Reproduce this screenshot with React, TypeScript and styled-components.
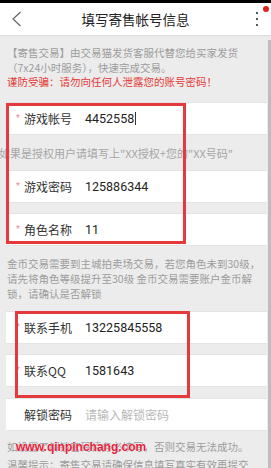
import React from "react";
import styled, { createGlobalStyle } from "styled-components";

const GlobalStyle = createGlobalStyle`
  html, body { margin: 0; padding: 0; background: #ececec; }
  body { font-family: Roboto, "Noto Sans CJK SC", sans-serif; }
  * { box-sizing: border-box; }
`;

const Page = styled.div`
  position: relative;
  width: 271px;
  height: 468px;
  overflow: hidden;
  background: #ececec;
`;

const Header = styled.header`
  height: 36px;
  border-top: 3px solid #000;
  border-bottom: 1px solid #dcdcdc;
  background: #fff;
  display: grid;
  grid-template-columns: 40px 1fr 40px;
  align-items: center;
`;

const BackBtn = styled.div`
  display: flex;
  align-items: center;
  padding-left: 11px;
`;

const Title = styled.h1`
  margin: 0;
  text-align: center;
  font-size: 13.5px;
  font-weight: 400;
  color: #222;
  font-family: "Noto Sans CJK SC", sans-serif;
`;

const MenuBtn = styled.div`
  position: relative;
  height: 100%;
`;

const Dots = styled.div`
  position: absolute;
  left: 25px;
  top: 9px;
  display: flex;
  flex-direction: column;
  gap: 4px;
  span {
    width: 2px;
    height: 2px;
    background: #555;
  }
`;

const Badge = styled.div`
  position: absolute;
  right: 2px;
  top: 3px;
  width: 6px;
  height: 6px;
  border-radius: 50%;
  background: #e0201e;
`;

const Note = styled.div<{ $pt?: number; $pb?: number; $lh?: number }>`
  padding: ${(p) => p.$pt ?? 10}px 6px ${(p) => p.$pb ?? 10}px 7px;
  font-size: 10.5px;
  line-height: ${(p) => p.$lh ?? 15}px;
  color: #9c9c9c;
  font-family: "Noto Sans CJK SC", sans-serif;
  white-space: nowrap;
`;

const Warn = styled.div`
  color: #e53935;
  line-height: 14px;
`;

const Row = styled.div<{ $mt?: number }>`
  margin: ${(p) => p.$mt ?? 0}px 4px 0 6px;
  height: 33px;
  background: #fff;
  border-top: 1px solid #e4e4e4;
  border-bottom: 1px solid #e4e4e4;
  display: flex;
  align-items: center;
  padding-left: 10px;
`;

const Star = styled.span`
  width: 8px;
  color: #e58a9e;
  font-size: 9px;
  line-height: 1;
`;

const Label = styled.span`
  width: 61px;
  font-size: 12px;
  color: #333;
  font-family: "Noto Sans CJK SC", sans-serif;
`;

const Value = styled.span<{ $placeholder?: boolean }>`
  font-size: ${(p) => (p.$placeholder ? 12 : 12.5)}px;
  color: ${(p) => (p.$placeholder ? "#b8b8b8" : "#222")};
  font-family: ${(p) => (p.$placeholder ? '"Noto Sans CJK SC", sans-serif' : 'Roboto, "Noto Sans CJK SC", sans-serif')};
  display: flex;
  align-items: center;
`;

const Caret = styled.i`
  display: inline-block;
  width: 1px;
  height: 13px;
  background: #333;
  margin-left: 1px;
`;

const Hint = styled.div`
  height: 35px;
  display: flex;
  align-items: center;
  margin-left: -1px;
  font-size: 11px;
  color: #a6a6a6;
  white-space: nowrap;
  font-family: "Noto Sans CJK SC", sans-serif;
`;

const Para = styled.div`
  position: relative;
`;

const Watermark = styled.span`
  position: absolute;
  left: 9px;
  top: 0;
  font-family: "Liberation Sans", sans-serif;
  font-weight: 700;
  font-size: 12px;
  color: #e8213a;
  text-shadow: 0 0 1px #fff;
`;

const Mark = styled.div<{ $l: number; $t: number; $w: number; $h: number }>`
  position: absolute;
  left: ${(p) => p.$l}px;
  top: ${(p) => p.$t}px;
  width: ${(p) => p.$w}px;
  height: ${(p) => p.$h}px;
  border: 3px solid #e53a3d;
  pointer-events: none;
`;

const Scrollbar = styled.div`
  position: absolute;
  right: 0;
  top: 40px;
  bottom: 0;
  width: 3px;
  background: #bdbdbd;
`;

const Field = ({ label, value, star = true, placeholder, caret }: { label: string; value: string; star?: boolean; placeholder?: boolean; caret?: boolean }) => (
  <>
    <Star>{star ? "*" : ""}</Star>
    <Label>{label}</Label>
    <Value $placeholder={placeholder}>
      {value}
      {caret && <Caret />}
    </Value>
  </>
);

export default function App() {
  return (
    <>
      <GlobalStyle />
      <Page>
        <Header>
          <BackBtn>
            <svg width="12" height="16" viewBox="0 0 12 16">
              <polyline points="9.5,1 2,8 9.5,15" fill="none" stroke="#666" strokeWidth="1.2" />
            </svg>
          </BackBtn>
          <Title>填写寄售帐号信息</Title>
          <MenuBtn>
            <Dots>
              <span />
              <span />
              <span />
            </Dots>
            <Badge />
          </MenuBtn>
        </Header>

        <Note $pt={10} $pb={13} $lh={14.5}>
          【寄售交易】由交易猫发货客服代替您给买家发货
          <br />
          （7x24小时服务），快速完成交易。
          <Warn>谨防受骗：请勿向任何人泄露您的账号密码！</Warn>
        </Note>

        <Row>
          <Field label="游戏帐号" value="4452558" caret />
        </Row>
        <Hint>如果是授权用户请填写上"XX授权+您的"XX号码"</Hint>
        <Row>
          <Field label="游戏密码" value="125886344" />
        </Row>
        <Row $mt={10}>
          <Field label="角色名称" value="11" />
        </Row>

        <Note $pt={10} $pb={10} $lh={15}>
          金币交易需要到主城拍卖场交易，若您角色未到30级，
          <br />
          请先将角色等级提升至30级 金币交易需要账户金币解
          <br />
          锁，请确认是否解锁
        </Note>

        <Row>
          <Field label="联系手机" value="13225845558" />
        </Row>
        <Row $mt={10}>
          <Field label="联系QQ" value="1581643" />
        </Row>
        <Row $mt={11}>
          <Field label="解锁密码" value="请输入解锁密码" star={false} placeholder />
        </Row>

        <Note $pt={7} $pb={0} $lh={18}>
          <Para>
            如设置了解锁密码请务必填写，否则交易无法成功。
            <Watermark>www.qinpinchang.com</Watermark>
          </Para>
          <Para>温馨提示：寄售交易请确保信息填写真实有效再提交</Para>
        </Note>

        <Mark $l={6} $t={103} $w={180} $h={141} />
        <Mark $l={15} $t={311} $w={175} $h={87} />
        <Scrollbar />
      </Page>
    </>
  );
}
